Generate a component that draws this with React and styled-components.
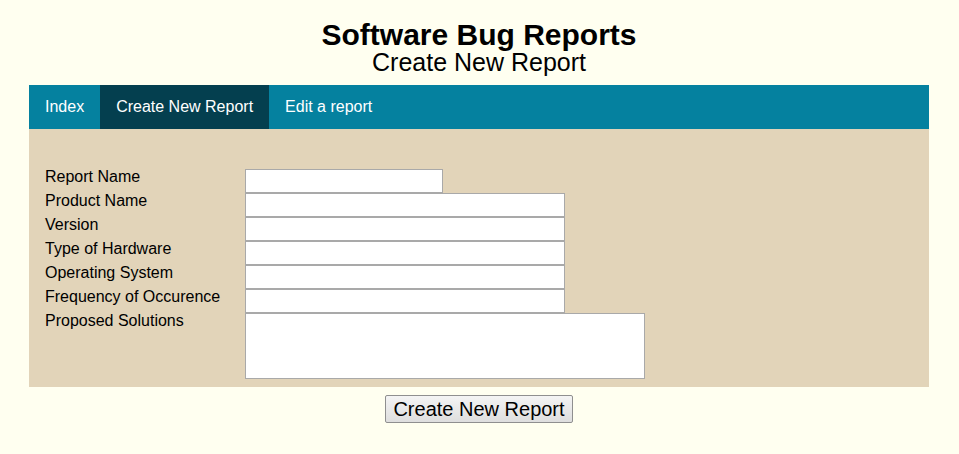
import React from 'react';
import styled, { createGlobalStyle } from 'styled-components';

const GlobalStyle = createGlobalStyle`
  html, body {
    margin: 0;
    padding: 0;
    background: #fffff0;
    font-family: 'Liberation Sans', Arial, sans-serif;
    color: #000;
  }
`;

const Page = styled.div`
  width: 900px;
  margin: 0 30px 0 29px;
  padding-top: 20px;
`;

const Header = styled.header`
  text-align: center;
  margin-bottom: 10px;
`;

const Title = styled.h1`
  margin: 0;
  font-size: 30px;
  line-height: 30px;
  font-weight: bold;
`;

const Subtitle = styled.h2`
  margin: 0;
  font-size: 25px;
  line-height: 25px;
  font-weight: normal;
`;

const Nav = styled.nav`
  display: flex;
  height: 44px;
  background: #05819f;
`;

const NavLink = styled.a`
  display: flex;
  align-items: center;
  padding: 0 16px;
  color: #fff;
  font-size: 16px;
  text-decoration: none;
  background: ${(props) => (props.$active ? '#043f4f' : 'transparent')};
`;

const Panel = styled.form`
  background: #e2d4b9;
  padding: 40px 16px 8px;
`;

const FormGrid = styled.div`
  display: grid;
  grid-template-columns: 200px auto;
  justify-content: start;
  align-items: start;
`;

const Label = styled.label`
  font-size: 16px;
  line-height: 18px;
  margin-top: -1px;
`;

const TextInput = styled.input`
  box-sizing: border-box;
  display: block;
  width: ${(props) => props.$width || '320px'};
  height: 24px;
  margin: 0;
  border: 1px solid #a9a9a9;
  background: #fff;
  font-size: 14px;
`;

const TextArea = styled.textarea`
  box-sizing: border-box;
  display: block;
  width: 400px;
  height: 66px;
  margin: 0;
  border: 1px solid #a9a9a9;
  background: #fff;
  resize: none;
`;

const Actions = styled.div`
  display: flex;
  justify-content: center;
  padding-top: 8px;
`;

const SubmitButton = styled.button`
  box-sizing: border-box;
  height: 28px;
  padding: 0 7px;
  font-family: 'Liberation Sans', Arial, sans-serif;
  font-size: 20px;
  color: #000;
  border: 1px solid #8f8f8f;
  border-radius: 2px;
  background: linear-gradient(#f4f4f4, #dedede);
`;

const fields = [
  { label: 'Report Name', width: '198px' },
  { label: 'Product Name' },
  { label: 'Version' },
  { label: 'Type of Hardware' },
  { label: 'Operating System' },
  { label: 'Frequency of Occurence' },
];

export default function App() {
  return (
    <>
      <GlobalStyle />
      <Page>
        <Header>
          <Title>Software Bug Reports</Title>
          <Subtitle>Create New Report</Subtitle>
        </Header>
        <Nav>
          <NavLink href='#'>Index</NavLink>
          <NavLink href='#' $active>
            Create New Report
          </NavLink>
          <NavLink href='#'>Edit a report</NavLink>
        </Nav>
        <Panel onSubmit={(e) => e.preventDefault()}>
          <FormGrid>
            {fields.map((f) => (
              <React.Fragment key={f.label}>
                <Label>{f.label}</Label>
                <TextInput type='text' $width={f.width} />
              </React.Fragment>
            ))}
            <Label>Proposed Solutions</Label>
            <TextArea />
          </FormGrid>
        </Panel>
        <Actions>
          <SubmitButton type='button'>Create New Report</SubmitButton>
        </Actions>
      </Page>
    </>
  );
}
